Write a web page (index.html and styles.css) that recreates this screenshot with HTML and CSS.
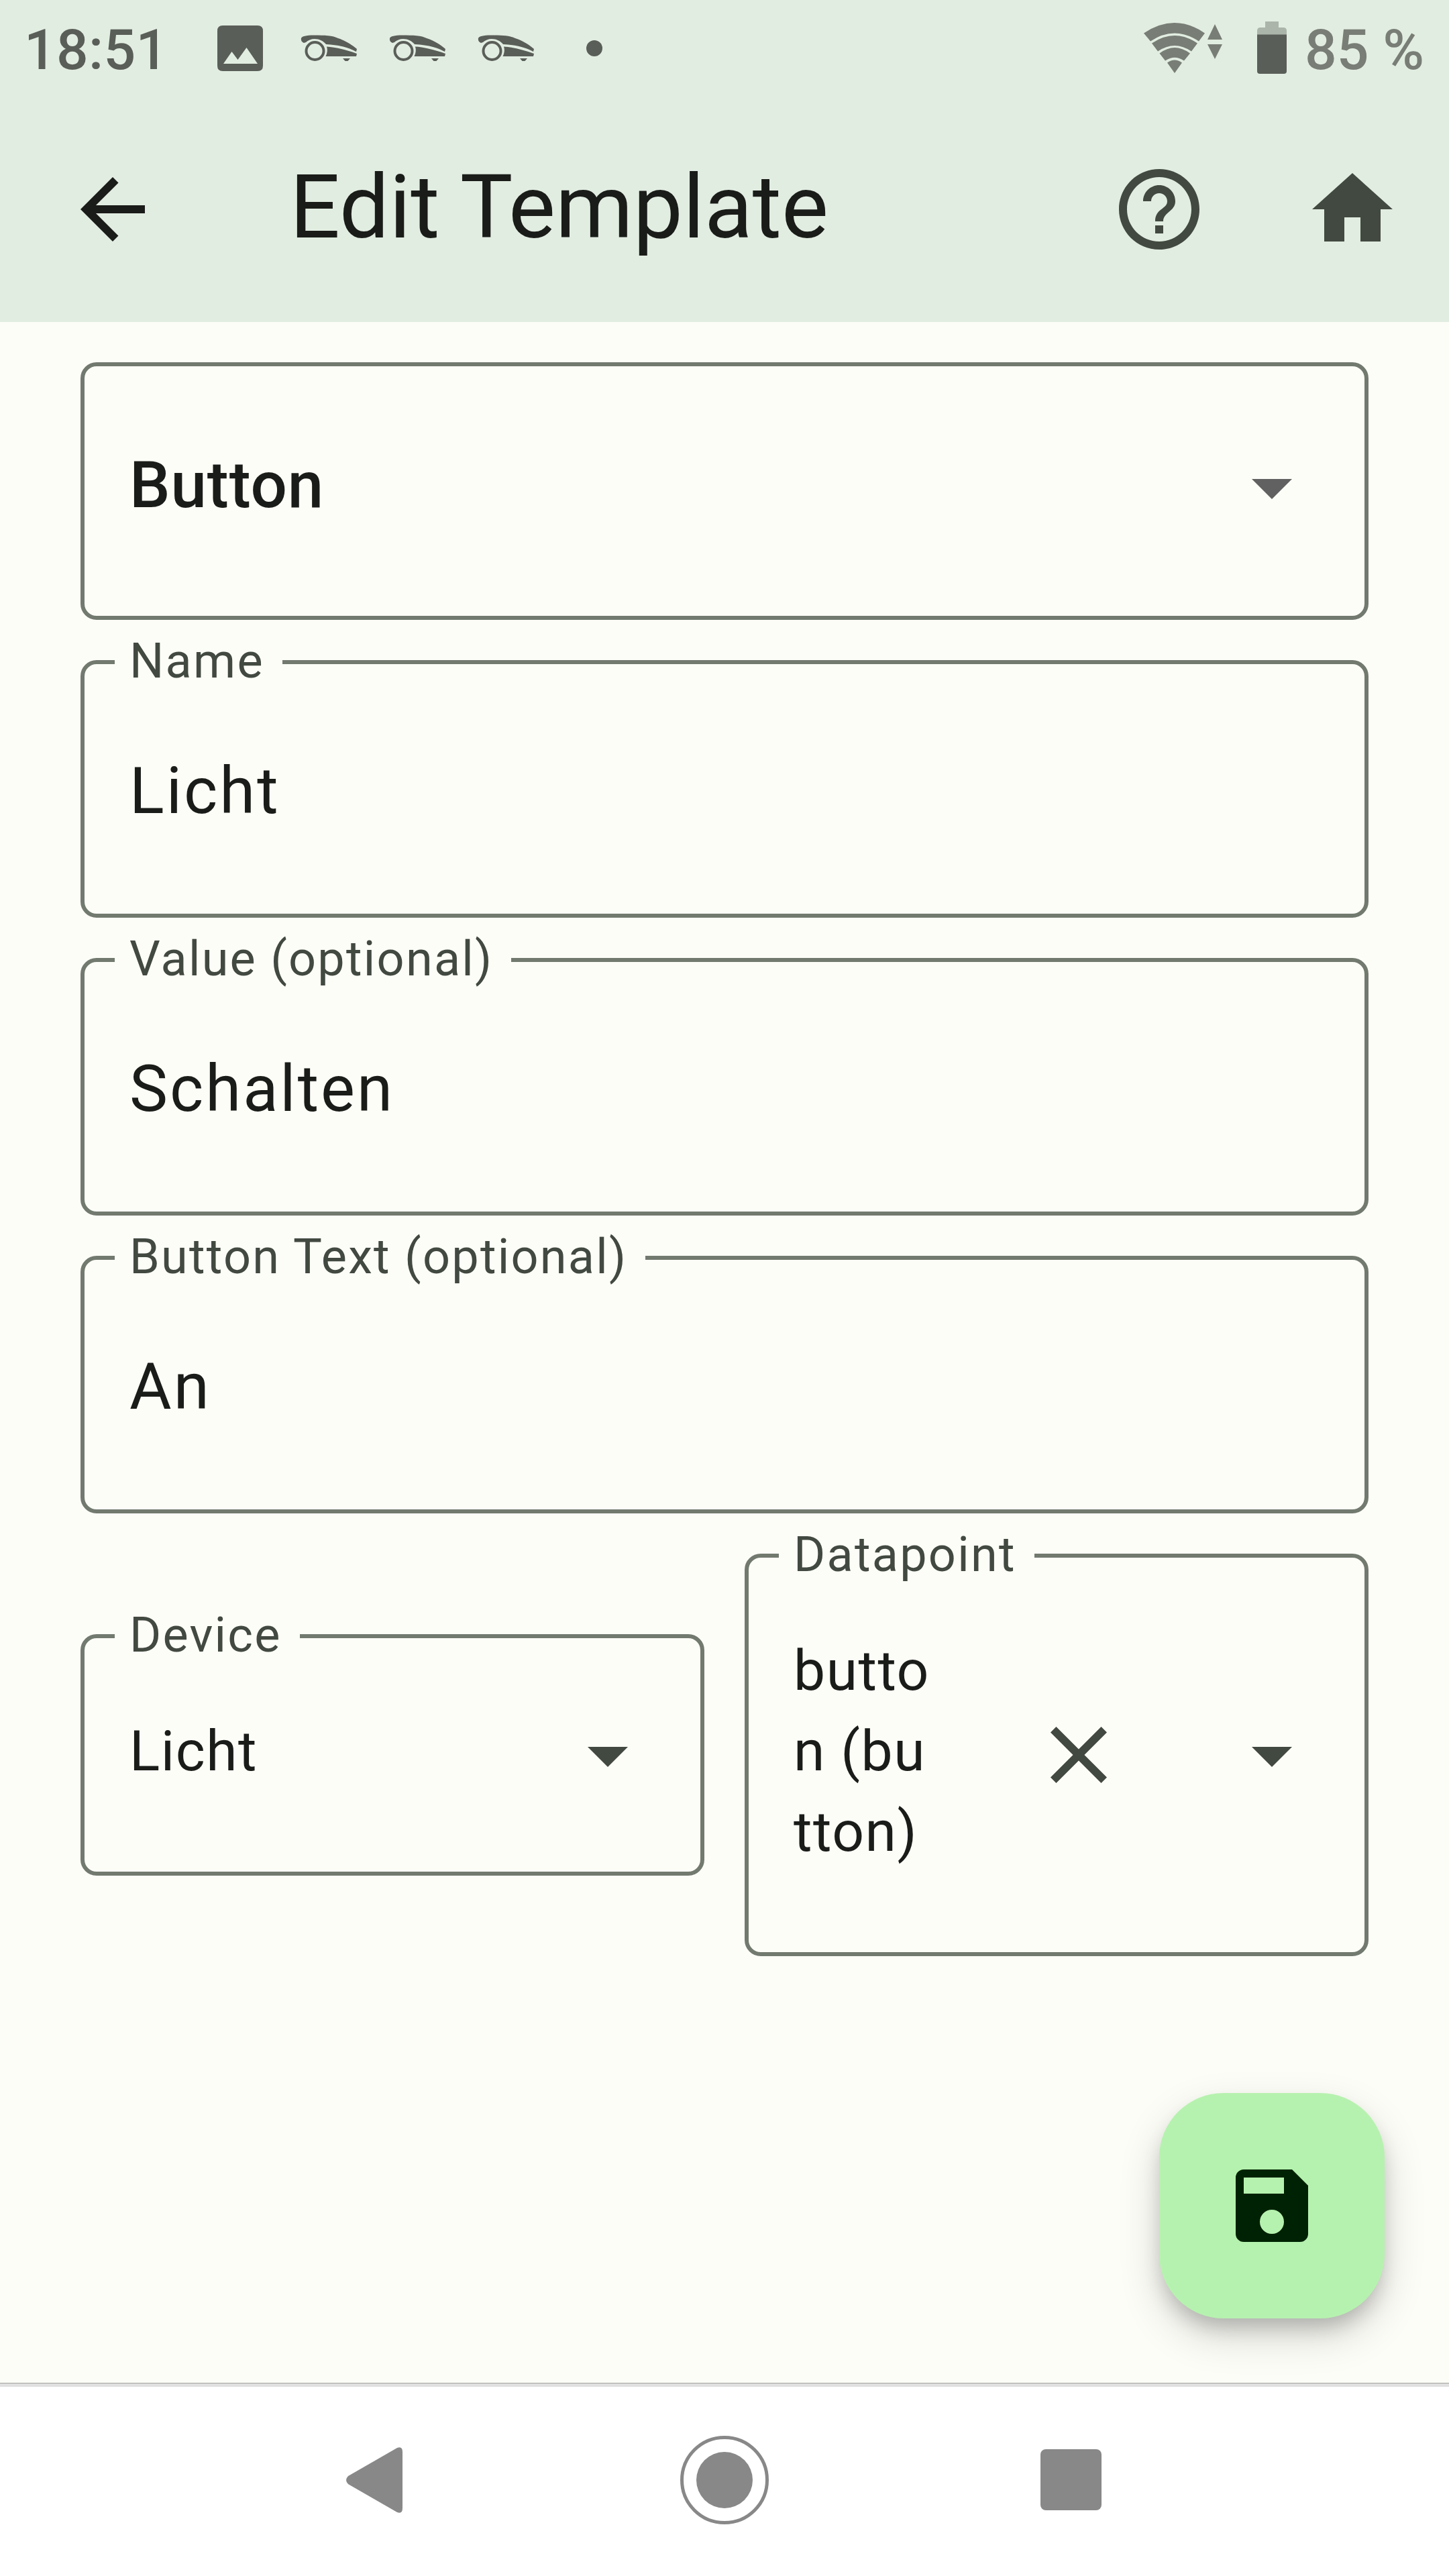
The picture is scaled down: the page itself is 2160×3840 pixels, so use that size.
FILE: index.html
```html
<!DOCTYPE html>
<html lang="en">
<head>
<meta charset="utf-8">
<title>Edit Template</title>
<link rel="stylesheet" href="styles.css">
</head>
<body>
<svg class="defs" aria-hidden="true">
  <symbol id="caret" viewBox="0 0 24 24"><path d="M7 10l5 5 5-5z"/></symbol>
  <symbol id="car" viewBox="0 0 84 40">
    <path d="M1 5C2 2 8 .5 20 .5C36 .5 48 1 56 5C68 9 77 15 84 21L83 25C74 20 60 15 38 14C34 9 28 6 21 6C16 6 11 8 8 11L5 12Q0 10 1 5Z"/>
    <path d="M39 17.500C50 18 68 22 84 28L83 32H37.500C40 27 40.500 22 39 17.500Z"/>
    <path d="M63 35H74L70.500 39H66.500Z"/>
    <ellipse class="wheel" cx="21.500" cy="24" rx="13" ry="13"/>
  </symbol>
</svg>
<div class="screen">
  <header class="top">
    <div class="status">
      <span class="clock">18:51</span>
      <svg class="picture" viewBox="0 0 68 68"><path fill-rule="evenodd" d="M8 0H60Q68 0 68 8V60Q68 68 60 68H8Q0 68 0 60V8Q0 0 8 0ZM9 57H60L43.500 33L30.500 51L21.500 39Z"/></svg>
      <svg class="car"><use href="#car"/></svg>
      <svg class="car"><use href="#car"/></svg>
      <svg class="car"><use href="#car"/></svg>
      <span class="more"></span>
      <svg class="wifi" viewBox="0 0 118 76">
        <path d="M0 15.500Q46 -15.500 91 15.500L82 27.500Q46 3.500 10 27.500Z"/>
        <path d="M12 30.500Q46 7.500 80 30.500L71 42.500Q46 25.500 21 42.500Z"/>
        <path d="M23.500 45.500Q46 28.500 69 45.500L60 56.500Q46 47 32 56.500Z"/>
        <path d="M35 59.500Q46 51.500 57 59.500L46 75Z"/>
        <path d="M106 2L117 25H95ZM95 32H117L106 54Z"/>
      </svg>
      <svg class="battery" viewBox="0 0 44 78">
        <path class="battery-empty" d="M12 0H32V9H39Q44 9 44 14V20H0V14Q0 9 5 9H12Z"/>
        <path d="M0 19.500H44V74Q44 78 40 78H4Q0 78 0 74Z"/>
      </svg>
      <span class="percent">85 %</span>
    </div>
    <div class="appbar">
      <svg class="icon back" viewBox="0 0 24 24"><path d="M20 11H7.830l5.590-5.590L12 4l-8 8 8 8 1.410-1.410L7.830 13H20v-2z"/></svg>
      <h1 class="title">Edit Template</h1>
      <svg class="icon" viewBox="0 0 24 24"><path d="M11 18h2v-2h-2v2zm1-16C6.480 2 2 6.480 2 12s4.480 10 10 10 10-4.480 10-10S17.520 2 12 2zm0 18c-4.410 0-8-3.590-8-8s3.590-8 8-8 8 3.590 8 8-3.590 8-8 8zm0-14c-2.210 0-4 1.790-4 4h2c0-1.100.9-2 2-2s2 .9 2 2c0 2-3 1.750-3 5h2c0-2.250 3-2.500 3-5 0-2.210-1.790-4-4-4z"/></svg>
      <svg class="icon" viewBox="0 0 24 24"><path d="M10 20v-6h4v6h5v-8h3L12 3 2 12h3v8z"/></svg>
    </div>
  </header>
  <main class="form">
    <fieldset class="field template">
      <span class="value strong">Button</span>
      <svg class="icon muted"><use href="#caret"/></svg>
    </fieldset>
    <fieldset class="field">
      <legend class="label">Name</legend>
      <span class="value">Licht</span>
    </fieldset>
    <fieldset class="field">
      <legend class="label">Value (optional)</legend>
      <span class="value">Schalten</span>
    </fieldset>
    <fieldset class="field">
      <legend class="label">Button Text (optional)</legend>
      <span class="value">An</span>
    </fieldset>
    <div class="pair">
      <fieldset class="field select">
        <legend class="label">Device</legend>
        <span class="choice">Licht</span>
        <svg class="icon"><use href="#caret"/></svg>
      </fieldset>
      <fieldset class="field select">
        <legend class="label">Datapoint</legend>
        <span class="choice">butto<br>n (bu<br>tton)</span>
        <svg class="icon clear" viewBox="0 0 24 24"><path d="M19 6.410L17.590 5 12 10.590 6.410 5 5 6.410 10.590 12 5 17.590 6.410 19 12 13.410 17.590 19 19 17.590 13.410 12z"/></svg>
        <svg class="icon"><use href="#caret"/></svg>
      </fieldset>
    </div>
    <button class="fab" aria-label="Save">
      <svg class="icon save" viewBox="0 0 24 24"><path fill-rule="evenodd" d="M17 3H5a2 2 0 0 0-2 2v14a2 2 0 0 0 2 2h14a2 2 0 0 0 2-2V7zM12 19a3 3 0 1 1 0-6 3 3 0 0 1 0 6zM15 9H5V5h10z"/></svg>
    </button>
  </main>
  <nav class="nav">
    <svg class="nav-back" viewBox="0 0 84 98"><path d="M3 43L76 1Q84 -2 84 7V91Q84 100 76 97L3 55Q-3 49 3 43Z"/></svg>
    <svg class="nav-home" viewBox="0 0 132 132"><circle class="ring" cx="66" cy="66" r="63.500"/><circle cx="66" cy="66" r="42"/></svg>
    <span class="nav-recent"></span>
  </nav>
</div>
</body>
</html>
```
FILE: styles.css
```css
* {
  box-sizing: border-box;
}

body {
  margin: 0;
  font-family: Roboto, "Liberation Sans", sans-serif;
  color: #1a1c19;
}

svg {
  display: block;
  flex: none;
}

.defs {
  display: none;
}

.screen {
  width: 2160px;
  height: 3840px;
  display: flex;
  flex-direction: column;
  background: #fcfdf7;
}

.top {
  background: #e2ede1;
}

.status {
  height: 144px;
  padding: 0 38px 0 36px;
  display: flex;
  align-items: center;
  font-size: 84px;
  font-weight: 500;
  color: #5a5e58;
  fill: #5a5e58;
  white-space: nowrap;
}

.clock {
  width: 288px;
  height: 144px;
  letter-spacing: 0.3px;
  line-height: 150px;
}

.picture {
  width: 68px;
  height: 68px;
  margin-right: 56px;
}

.car {
  width: 84px;
  height: 40px;
  margin-right: 48px;
}

.wheel {
  fill: none;
  stroke: #5a5e58;
  stroke-width: 4;
}

.more {
  width: 24px;
  height: 24px;
  margin-left: 30px;
  border-radius: 50%;
  background: #5a5e58;
}

.wifi {
  width: 118px;
  height: 76px;
  margin-left: auto;
  fill: #787d75;
}

.battery {
  width: 44px;
  height: 78px;
  margin: 0 27px 2px 51px;
}

.battery-empty {
  fill: #abb5aa;
}

.percent {
  width: 177px;
  height: 144px;
  line-height: 150px;
  color: #787d75;
}

.appbar {
  height: 336px;
  padding: 0 72px 0 96px;
  display: flex;
  align-items: center;
}

.title {
  flex: 1;
  margin: 0 0 0 192px;
  padding-bottom: 7px;
  font-size: 132px;
  font-weight: 400;
  line-height: 168px;
}

.icon {
  width: 144px;
  height: 144px;
  fill: #424940;
}

.back {
  fill: #1a1c19;
}

.appbar .icon + .icon {
  margin-left: 144px;
}

.form {
  position: relative;
  flex: 1;
  padding: 60px 120px 0;
  display: flex;
  flex-direction: column;
  gap: 60px;
}

.field {
  height: 384px;
  min-width: 0;
  margin: 0;
  padding: 120px 66px 0 45px;
  border: 6px solid #72796f;
  border-radius: 24px;
  display: flex;
  align-items: flex-start;
}

.template {
  padding-top: 108px;
}

.label {
  height: 6px;
  padding: 0 27px 0 22px;
  font-size: 72px;
  line-height: 3px;
  letter-spacing: 2.25px;
  color: #424940;
  white-space: nowrap;
}

.value {
  flex: 1;
  padding-left: 22px;
  font-size: 96px;
  line-height: 138px;
  letter-spacing: 3px;
}

.strong {
  font-weight: 500;
  letter-spacing: 0.9px;
}

.muted {
  fill: #616161;
}

.pair {
  display: grid;
  grid-template-columns: 1fr 1fr;
  gap: 60px;
  align-items: center;
}

.select {
  height: auto;
  padding: 114px 66px 114px 45px;
  align-items: center;
}

.choice {
  flex: 1;
  margin: -5px 0 5px;
  padding-left: 22px;
  font-size: 84px;
  line-height: 120px;
  letter-spacing: 1.5px;
}

.select .icon {
  margin: -12px 0;
}

.select .clear {
  margin-right: 144px;
}

.fab {
  position: absolute;
  right: 96px;
  bottom: 96px;
  width: 336px;
  height: 336px;
  padding: 0;
  border: 0;
  border-radius: 96px;
  display: flex;
  align-items: center;
  justify-content: center;
  background: #b6f2af;
  box-shadow: 0 18px 30px -6px rgba(0, 0, 0, 0.2), 0 26px 62px rgba(0, 0, 0, 0.16);
}

.save {
  fill: #002204;
}

.nav {
  height: 288px;
  padding: 0 518px 0 516px;
  border-top: 1px solid #a3a4a0;
  box-shadow: inset 0 5px #e0e0e0;
  display: flex;
  align-items: center;
  justify-content: space-between;
  background: #fff;
  fill: #888;
}

.nav-back {
  width: 84px;
  height: 98px;
}

.nav-home {
  width: 132px;
  height: 132px;
  margin-left: 9px;
}

.ring {
  fill: none;
  stroke: #888;
  stroke-width: 5;
}

.nav-recent {
  width: 91px;
  height: 91px;
  border-radius: 8px;
  background: #888;
}
```
